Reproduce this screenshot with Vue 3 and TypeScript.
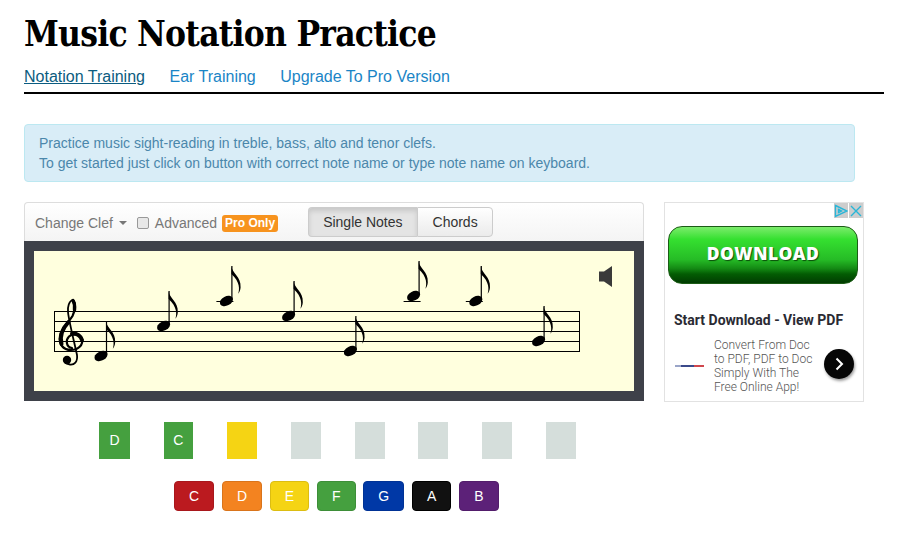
<template>
  <div class="page">
    <h1 class="title">Music Notation Practice</h1>
    <nav class="tabs">
      <a class="tab active" href="#">Notation Training</a>
      <a class="tab" href="#">Ear Training</a>
      <a class="tab" href="#">Upgrade To Pro Version</a>
    </nav>

    <div class="alert">
      Practice music sight-reading in treble, bass, alto and tenor clefs.<br />
      To get started just click on button with correct note name or type note name on keyboard.
    </div>

    <div class="main">
      <div class="trainer">
        <div class="toolbar">
          <span class="clef-menu">Change Clef<i class="caret"></i></span>
          <span class="check"></span>
          <span class="adv">Advanced</span>
          <span class="pro">Pro Only</span>
          <div class="btn-group">
            <button class="btn on">Single Notes</button>
            <button class="btn">Chords</button>
          </div>
        </div>
        <div class="stage">
          <svg class="score" width="600" height="140" viewBox="0 0 600 140">
            <line v-for="y in staffLines" :key="y" x1="20" x2="546" :y1="y" :y2="y" class="ln" />
            <line x1="20.5" x2="20.5" y1="60" y2="101" class="ln" />
            <line x1="545.5" x2="545.5" y1="60" y2="101" class="ln" />

            <!-- treble clef -->
            <g transform="translate(-34 -251)" fill="none" stroke="#000" stroke-linecap="round">
              <path d="M72 348 C66 347 65.5 340 69 336.5 C73 333 80 334 82 339 C83.5 345 78 350 71 350 C63 350 58.5 344 60 336 C61.5 328 69 322 72.5 316 C75.5 310 75.5 303 73 300.5" stroke-width="2.2" />
              <path d="M61.5 344 C59 335 63 328 68.5 322 M72 333.5 C77 333 81 336 82 340" stroke-width="4" />
              <path d="M75 304 C74 301 73 300 72.5 300 C69 301 67.5 307 68 312 C69 322 75 345 77 355 C78 362 74 365 70 364.5 C67 364 65 363 64.5 361" stroke-width="1.8" />
              <path d="M74.5 310 C75 306 74.5 303 73 300.5" stroke-width="3.4" />
              <circle cx="67" cy="360" r="4.2" fill="#000" stroke="none" />
            </g>

            <g v-for="n in notes" :key="n.x" :transform="`translate(${n.x} ${n.y})`">
              <line v-if="n.ledger" x1="-10" x2="7" :y1="50.5 - n.y" :y2="50.5 - n.y" class="ln" />
              <ellipse rx="7" ry="4.6" transform="rotate(-27)" />
              <line x1="5.5" x2="5.5" y1="-2" y2="-35" class="stem" />
              <path d="M5 -35 C5.8 -27 14.8 -25 14.2 -13.5 C14 -10.5 12.8 -8.5 11.8 -7.2 C13.2 -11.5 13.8 -19 5 -27 Z" />
            </g>

            <polygon class="speaker" points="565,20.5 570,20.5 578,15 578,36 570,30.5 565,30.5" />
          </svg>
        </div>

        <div class="answers">
          <div
            v-for="(a, i) in answers"
            :key="i"
            class="answer"
            :class="a.tone"
            :style="{ width: a.w + 'px' }"
          >{{ a.label }}</div>
        </div>

        <div class="keys">
          <button v-for="k in keys" :key="k.name" class="key" :class="k.tone">{{ k.name }}</button>
        </div>
      </div>

      <aside class="ad">
        <div class="ad-marks">
          <span class="mark">
            <svg width="14" height="14" viewBox="0 0 14 14" fill="none" stroke="#29b6d8" stroke-width="1.4"><path d="M1.5 1.5 L13 7 L1.5 12.5 Z M4.5 5.5 L7.5 7 L4.5 8.5 Z" /></svg>
          </span>
          <span class="mark">
            <svg width="14" height="14" viewBox="0 0 14 14" fill="none" stroke="#29b6d8" stroke-width="1.4"><path d="M2 2 L12 12 M12 2 L2 12" /></svg>
          </span>
        </div>
        <div class="ad-cta">DOWNLOAD</div>
        <div class="ad-head">Start Download - View PDF</div>
        <div class="ad-row">
          <div class="ad-logo"></div>
          <div class="ad-copy">Convert From Doc<br />to PDF, PDF to Doc<br />Simply With The<br />Free Online App!</div>
          <div class="ad-go">
            <svg width="14" height="14" viewBox="0 0 14 14" fill="none" stroke="#fff" stroke-width="2"><path d="M4.5 1.5 L10 7 L4.5 12.5" /></svg>
          </div>
        </div>
      </aside>
    </div>
  </div>
</template>

<script setup lang="ts">
const staffLines = [60.5, 70.5, 80.5, 90.5, 100.5]

const notes = [
  { x: 67, y: 105, ledger: false },
  { x: 129.6, y: 75, ledger: false },
  { x: 192.4, y: 50, ledger: true },
  { x: 254.6, y: 65, ledger: false },
  { x: 316.4, y: 100, ledger: false },
  { x: 379.6, y: 45, ledger: true },
  { x: 441.8, y: 50, ledger: true },
  { x: 504.6, y: 90, ledger: false }
]

const answers = [
  { label: 'D', tone: 'green', w: 31 },
  { label: 'C', tone: 'green', w: 29 },
  { label: '', tone: 'yellow', w: 30 },
  { label: '', tone: 'blank', w: 30 },
  { label: '', tone: 'blank', w: 30 },
  { label: '', tone: 'blank', w: 30 },
  { label: '', tone: 'blank', w: 30 },
  { label: '', tone: 'blank', w: 30 }
]

const keys = [
  { name: 'C', tone: 'red' },
  { name: 'D', tone: 'orange' },
  { name: 'E', tone: 'yellow' },
  { name: 'F', tone: 'green' },
  { name: 'G', tone: 'blue' },
  { name: 'A', tone: 'black' },
  { name: 'B', tone: 'purple' }
]
</script>

<style>
body {
  background: #fff;
}
</style>

<style scoped>
.page {
  width: 860px;
  padding: 0 13px 0 24px;
  font-family: "Liberation Sans", Arial, sans-serif;
  font-size: 14px;
}

.title {
  margin: 0;
  padding-top: 13px;
  height: 51px;
  font-family: "DejaVu Serif", serif;
  font-stretch: condensed;
  font-weight: 700;
  font-size: 35px;
  letter-spacing: -0.75px;
  line-height: 42px;
  color: #000;
}

.tabs {
  display: flex;
  gap: 24.5px;
  height: 28px;
  border-bottom: 2px solid #000;
  line-height: 26px;
  font-size: 16px;
}

.tab {
  color: #1a85c6;
  text-decoration: none;
}

.tab.active {
  color: #0b5c80;
  text-decoration: underline;
}

.alert {
  box-sizing: border-box;
  width: 831px;
  height: 58px;
  margin-top: 30px;
  padding: 8px 14px;
  background: #d9edf7;
  border: 1px solid #bce8f1;
  border-radius: 4px;
  color: #4b87ab;
  line-height: 20px;
}

.main {
  display: flex;
  gap: 20px;
  margin-top: 20px;
}

.trainer {
  width: 620px;
}

.toolbar {
  box-sizing: border-box;
  height: 39px;
  display: flex;
  align-items: center;
  padding: 0 10px;
  background: linear-gradient(#fff, #f4f4f4);
  border: 1px solid #ddd;
  border-bottom: 0;
  border-radius: 4px 4px 0 0;
  color: #777;
}

.clef-menu,
.adv,
.check {
  position: relative;
  top: 1px;
}

.clef-menu {
  display: flex;
  align-items: center;
}

.caret {
  width: 0;
  height: 0;
  margin-left: 6px;
  border-top: 4px solid #777;
  border-left: 4px solid transparent;
  border-right: 4px solid transparent;
}

.check {
  box-sizing: border-box;
  width: 12px;
  height: 12px;
  margin-left: 10px;
  background: #e8e8e8;
  border: 1px solid #999;
  border-radius: 2px;
}

.adv {
  margin-left: 6px;
}

.pro {
  margin-left: 5px;
  padding: 0 3px;
  height: 17px;
  line-height: 17px;
  background: #f7931e;
  color: #fff;
  font-size: 12px;
  font-weight: 700;
  border-radius: 3px;
  position: relative;
  top: 1px;
}

.btn-group {
  display: flex;
  margin-left: 30px;
}

.btn {
  height: 30px;
  padding: 0 14px 0 15px;
  background: linear-gradient(#fff, #ebebeb);
  border: 1px solid #ccc;
  border-radius: 0 4px 4px 0;
  color: #333;
  font: 14px "Liberation Sans", Arial, sans-serif;
}

.btn.on {
  padding: 0 14px;
  border-radius: 4px 0 0 4px;
  border-right: 0;
  background: #e4e4e4;
  box-shadow: inset 0 3px 5px rgba(0, 0, 0, 0.125);
}

.stage {
  background: #3e4149;
  padding: 10px;
  height: 140px;
}

.score {
  display: block;
  background: #ffffde;
}

.ln {
  stroke: #000;
  stroke-width: 1;
}

.stem {
  stroke: #000;
  stroke-width: 1.2;
}

.speaker {
  fill: #3a3a3a;
}

.answers {
  display: flex;
  gap: 33.88px;
  margin-top: 21px;
  padding-left: 75px;
}

.answer {
  height: 37px;
  line-height: 37px;
  text-align: center;
  color: #fff;
  font-size: 14px;
}

.answer.green {
  background: #45a03f;
}

.answer.yellow {
  background: #f5d414;
}

.answer.blank {
  background: #d5dedb;
}

.keys {
  display: flex;
  gap: 7.8px;
  margin-top: 22px;
  padding-left: 150px;
}

.key {
  height: 30px;
  padding: 0 14px;
  border-radius: 4px;
  border: 1px solid;
  color: #fff;
  font: 14px "Liberation Sans", Arial, sans-serif;
}

.key.red {
  background: #bb1a1f;
  border-color: #a8171c;
}

.key.orange {
  background: #f38320;
  border-color: #d9741b;
}

.key.yellow {
  background: #f5d414;
  border-color: #dcbd12;
}

.key.green {
  background: #45a03f;
  border-color: #3d8e38;
}

.key.blue {
  background: #0038a6;
  border-color: #003295;
}

.key.black {
  background: #111;
  border-color: #000;
}

.key.purple {
  background: #5c2178;
  border-color: #521d6b;
}

.ad {
  box-sizing: border-box;
  position: relative;
  width: 200px;
  height: 200px;
  border: 1px solid #e2e2e2;
  font-family: Roboto, sans-serif;
}

.ad-marks {
  position: absolute;
  top: 0;
  right: 0;
  display: flex;
  gap: 1px;
}

.mark {
  display: flex;
  width: 14px;
  height: 15px;
  background: #cdcdcd;
  align-items: center;
  justify-content: center;
}

.ad-cta {
  box-sizing: border-box;
  width: 190px;
  height: 58px;
  margin: 23px 0 0 3px;
  border: 1px solid #1c5c16;
  border-radius: 14px;
  background: linear-gradient(#7cec6c 0, #35e030 22%, #26bc26 58%, #148a14 74%, #035c03 84%, #013c01 100%);
  color: #fff;
  text-align: center;
  line-height: 52px;
  font-family: "Open Sans", sans-serif;
  font-weight: 800;
  font-size: 17.5px;
  letter-spacing: 0.4px;
  text-shadow: 1px 1px 1px #0a4d0a;
}

.ad-head {
  margin: 27px 0 0 9px;
  font-weight: 700;
  font-size: 14px;
  line-height: 18px;
  color: #2a2a33;
}

.ad-row {
  display: flex;
  align-items: center;
  margin-top: 9px;
}

.ad-logo {
  width: 29px;
  height: 2px;
  margin-left: 10px;
  background: linear-gradient(90deg, #9aa5c8 0 20%, #3b4a8a 20% 65%, #d0474d 65% 100%);
}

.ad-copy {
  margin-left: 10px;
  width: 110px;
  font-weight: 300;
  font-size: 12px;
  line-height: 14px;
  color: #555;
}

.ad-go {
  display: flex;
  width: 30px;
  height: 30px;
  margin: 0 0 4px 0;
  background: #060606;
  border-radius: 50%;
  align-items: center;
  justify-content: center;
  box-shadow: 1px 2px 3px rgba(0, 0, 0, 0.4);
}
</style>
